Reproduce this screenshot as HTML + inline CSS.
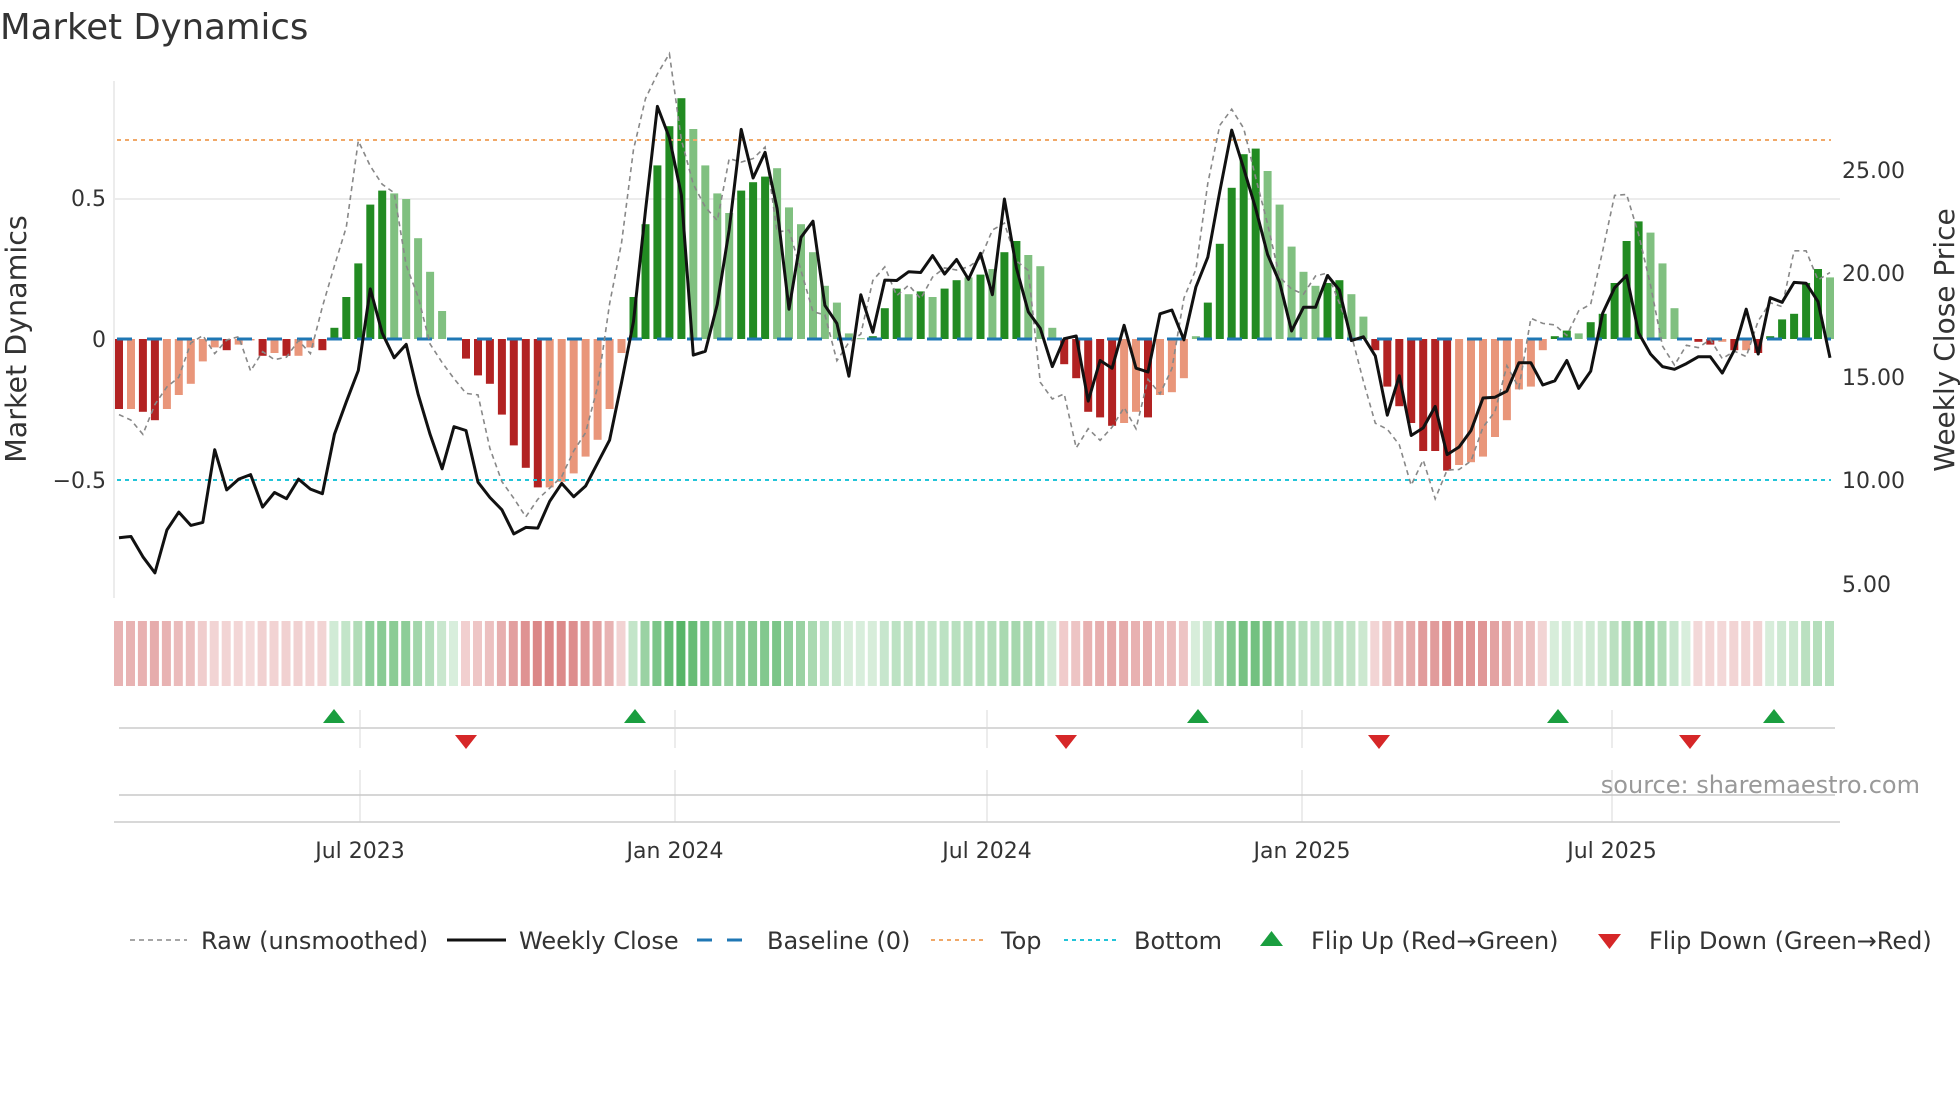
<!DOCTYPE html>
<html><head><meta charset="utf-8"><style>
html,body{margin:0;padding:0;background:#fff;width:1960px;height:1102px;overflow:hidden}
svg{display:block;font-family:"DejaVu Sans","Liberation Sans",sans-serif}
</style></head><body>
<svg id="s" width="1960" height="1102" viewBox="0 0 1960 1102" xmlns="http://www.w3.org/2000/svg">
<text x="0" y="39" font-size="35.5" fill="#333">Market Dynamics</text>
<g id="grid">
<line x1="114" y1="81" x2="114" y2="598" stroke="#e6e6e6" stroke-width="1.5"/>
<line x1="114" y1="199" x2="1840" y2="199" stroke="#ececec" stroke-width="2"/>
</g>
<g id="bars"></g>
<line x1="117" y1="140" x2="1831" y2="140" stroke="#f0a868" stroke-width="2" stroke-dasharray="4,4"/>
<line x1="117" y1="480" x2="1831" y2="480" stroke="#22c4d8" stroke-width="2" stroke-dasharray="4,4"/>
<line x1="117" y1="339" x2="1831" y2="339" stroke="#1f77b4" stroke-width="3" stroke-dasharray="15,15"/>
<polyline id="raw" fill="none" stroke="#888" stroke-width="1.6" stroke-dasharray="5,4"/>
<polyline id="px" fill="none" stroke="#111" stroke-width="3" stroke-linejoin="round"/>
<g font-size="22" fill="#333">
<text x="106" y="206" text-anchor="end">0.5</text>
<text x="106" y="347" text-anchor="end">0</text>
<text x="106" y="488" text-anchor="end">−0.5</text>
<text x="1842" y="178">25.00</text>
<text x="1842" y="281">20.00</text>
<text x="1842" y="385">15.00</text>
<text x="1842" y="488">10.00</text>
<text x="1842" y="592">5.00</text>
</g>
<text transform="translate(26,339) rotate(-90)" text-anchor="middle" font-size="28.5" fill="#333">Market Dynamics</text>
<text transform="translate(1954,340) rotate(-90)" text-anchor="middle" font-size="28" fill="#333">Weekly Close Price</text>
<g id="strip"></g>
<g stroke="#e6e6e6" stroke-width="1.5">
<line x1="360" y1="710" x2="360" y2="748"/><line x1="675" y1="710" x2="675" y2="748"/><line x1="987" y1="710" x2="987" y2="748"/><line x1="1302" y1="710" x2="1302" y2="748"/><line x1="1612" y1="710" x2="1612" y2="748"/>
<line x1="360" y1="770" x2="360" y2="822"/><line x1="675" y1="770" x2="675" y2="822"/><line x1="987" y1="770" x2="987" y2="822"/><line x1="1302" y1="770" x2="1302" y2="822"/><line x1="1612" y1="770" x2="1612" y2="822"/>
</g>
<line x1="119" y1="728" x2="1835" y2="728" stroke="#d8d8d8" stroke-width="2"/>
<line x1="119" y1="795" x2="1835" y2="795" stroke="#c8c8c8" stroke-width="1.5"/>
<line x1="114" y1="822" x2="1840" y2="822" stroke="#ccc" stroke-width="1.5"/>
<g id="mk"></g>
<text x="1920" y="793" text-anchor="end" font-size="24" fill="#999">source: sharemaestro.com</text>
<g font-size="22" fill="#333" text-anchor="middle">
<text x="360" y="858">Jul 2023</text><text x="675" y="858">Jan 2024</text><text x="987" y="858">Jul 2024</text><text x="1302" y="858">Jan 2025</text><text x="1612" y="858">Jul 2025</text>
</g>
<g font-size="24" fill="#333">
<line x1="130" y1="940" x2="187" y2="940" stroke="#888" stroke-width="1.6" stroke-dasharray="5,4"/>
<text x="201" y="949">Raw (unsmoothed)</text>
<line x1="447" y1="940" x2="506" y2="940" stroke="#111" stroke-width="3"/>
<text x="519" y="949">Weekly Close</text>
<line x1="697" y1="940" x2="752" y2="940" stroke="#1f77b4" stroke-width="3" stroke-dasharray="15,15"/>
<text x="767" y="949">Baseline (0)</text>
<line x1="931" y1="940" x2="987" y2="940" stroke="#f0a868" stroke-width="2" stroke-dasharray="4,4"/>
<text x="1001" y="949">Top</text>
<line x1="1064" y1="940" x2="1120" y2="940" stroke="#22c4d8" stroke-width="2" stroke-dasharray="4,4"/>
<text x="1134" y="949">Bottom</text>
<polygon points="1260,946 1283,946 1271.5,931" fill="#1a9e3f"/>
<text x="1311" y="949">Flip Up (Red→Green)</text>
<polygon points="1598,934 1621,934 1609.5,949" fill="#d62728"/>
<text x="1649" y="949">Flip Down (Green→Red)</text>
</g>
</svg>
<script>
var B="D-.25 L-.25 D-.26 D-.29 L-.25 L-.2 L-.16 L-.08 L-.03 D-.04 L-.02 L-.005 D-.06 L-.05 D-.06 L-.06 L-.03 D-.04 G.04 G.15 G.27 G.48 G.53 g.52 g.5 g.36 g.24 g.1 g.003 D-.07 D-.13 D-.16 D-.27 D-.38 D-.46 D-.53 L-.53 L-.51 L-.48 L-.42 L-.36 L-.25 L-.05 G.15 G.41 G.62 G.76 G.86 g.75 g.62 g.52 g.45 G.53 G.56 G.58 g.61 g.47 g.41 g.31 g.19 g.13 g.02 g.003 G.01 G.11 G.18 g.16 G.17 g.15 G.18 G.21 g.22 G.23 g.25 G.31 G.35 g.30 g.26 g.04 D-.09 D-.14 D-.26 D-.28 D-.31 L-.30 L-.26 D-.28 L-.2 L-.19 L-.14 g.01 G.13 G.34 G.54 G.66 G.68 g.6 g.48 g.33 g.24 g.19 G.2 G.21 g.16 g.08 D-.04 D-.17 D-.24 D-.3 D-.4 D-.4 D-.47 L-.45 L-.44 L-.42 L-.35 L-.29 L-.18 L-.17 L-.04 G.01 G.03 g.02 G.06 G.09 G.2 G.35 G.42 g.38 g.27 g.11 g.003 D-.01 D-.02 L-.01 D-.04 L-.04 D-.05 G.01 G.07 G.09 G.2 G.25 g.22".split(" ");
var P=[1405,1402,1455,1497,1385,1338,1373,1365,1175,1280,1252,1240,1325,1287,1303,1252,1278,1290,1135,1050,968,755,870,935,900,1030,1135,1225,1115,1125,1260,1300,1332,1395,1378,1380,1310,1263,1298,1270,1210,1150,1000,840,550,278,360,510,928,918,795,600,338,465,398,545,808,620,578,798,845,983,770,868,732,733,710,712,668,716,678,730,
662,770,520,700,815,858,958,885,878,1048,942,962,850,962,972,820,810,888,750,672,500,340,440,545,665,738,865,803,803,720,758,890,880,930,1085,982,1138,1118,1062,1188,1168,1125,1040,1038,1022,948,948,1006,995,942,1015,970,818,752,720,870,925,958,965,950,932,932,975,915,808,925,778,790,738,740,788,935];
var n=B.length,st=(1830-119)/(n-1),C={D:"#b22222",L:"#e9967a",G:"#228b22",g:"#80c080"};
var bs="",ss="",rp=[],pp=[],v=[];
for(var i=0;i<n;i++){v.push(parseFloat(B[i].slice(1)));}
for(var i=0;i<n;i++){var t=B[i][0],x=119+i*st,y0=339,h=v[i]*280;
bs+='<rect x="'+(x-4).toFixed(1)+'" y="'+(h>0?y0-h:y0).toFixed(1)+'" width="8" height="'+Math.max(Math.abs(h),1).toFixed(1)+'" fill="'+C[t]+'"/>';
var a,col;if(v[i]>=0){a=0.18+0.6*Math.min(v[i]/0.86,1);col="40,160,60";}else{a=0.2+0.45*Math.min(-v[i]/0.53,1);col="200,70,70";}
ss+='<rect x="'+(x-5).toFixed(1)+'" y="621" width="9" height="65" fill="rgba('+col+','+a.toFixed(2)+')"/>';
var nx=v[Math.min(i+1,n-1)],r=nx*1.08+(nx-v[i])*0.9;rp.push(x.toFixed(1)+","+(339-r*280).toFixed(1));
if(i<P.length)pp.push(x.toFixed(1)+","+(P[i]/2.613).toFixed(1));}
document.getElementById("bars").innerHTML=bs;document.getElementById("strip").innerHTML=ss;
document.getElementById("raw").setAttribute("points",rp.join(" "));
document.getElementById("px").setAttribute("points",pp.join(" "));
var m="";[334,635,1198,1558,1774].forEach(function(x){m+='<polygon points="'+(x-11)+',723 '+(x+11)+',723 '+x+',709" fill="#1a9e3f"/>';});
[466,1066,1379,1690].forEach(function(x){m+='<polygon points="'+(x-11)+',735 '+(x+11)+',735 '+x+',749" fill="#d62728"/>';});
document.getElementById("mk").innerHTML=m;
</script>
</body></html>
